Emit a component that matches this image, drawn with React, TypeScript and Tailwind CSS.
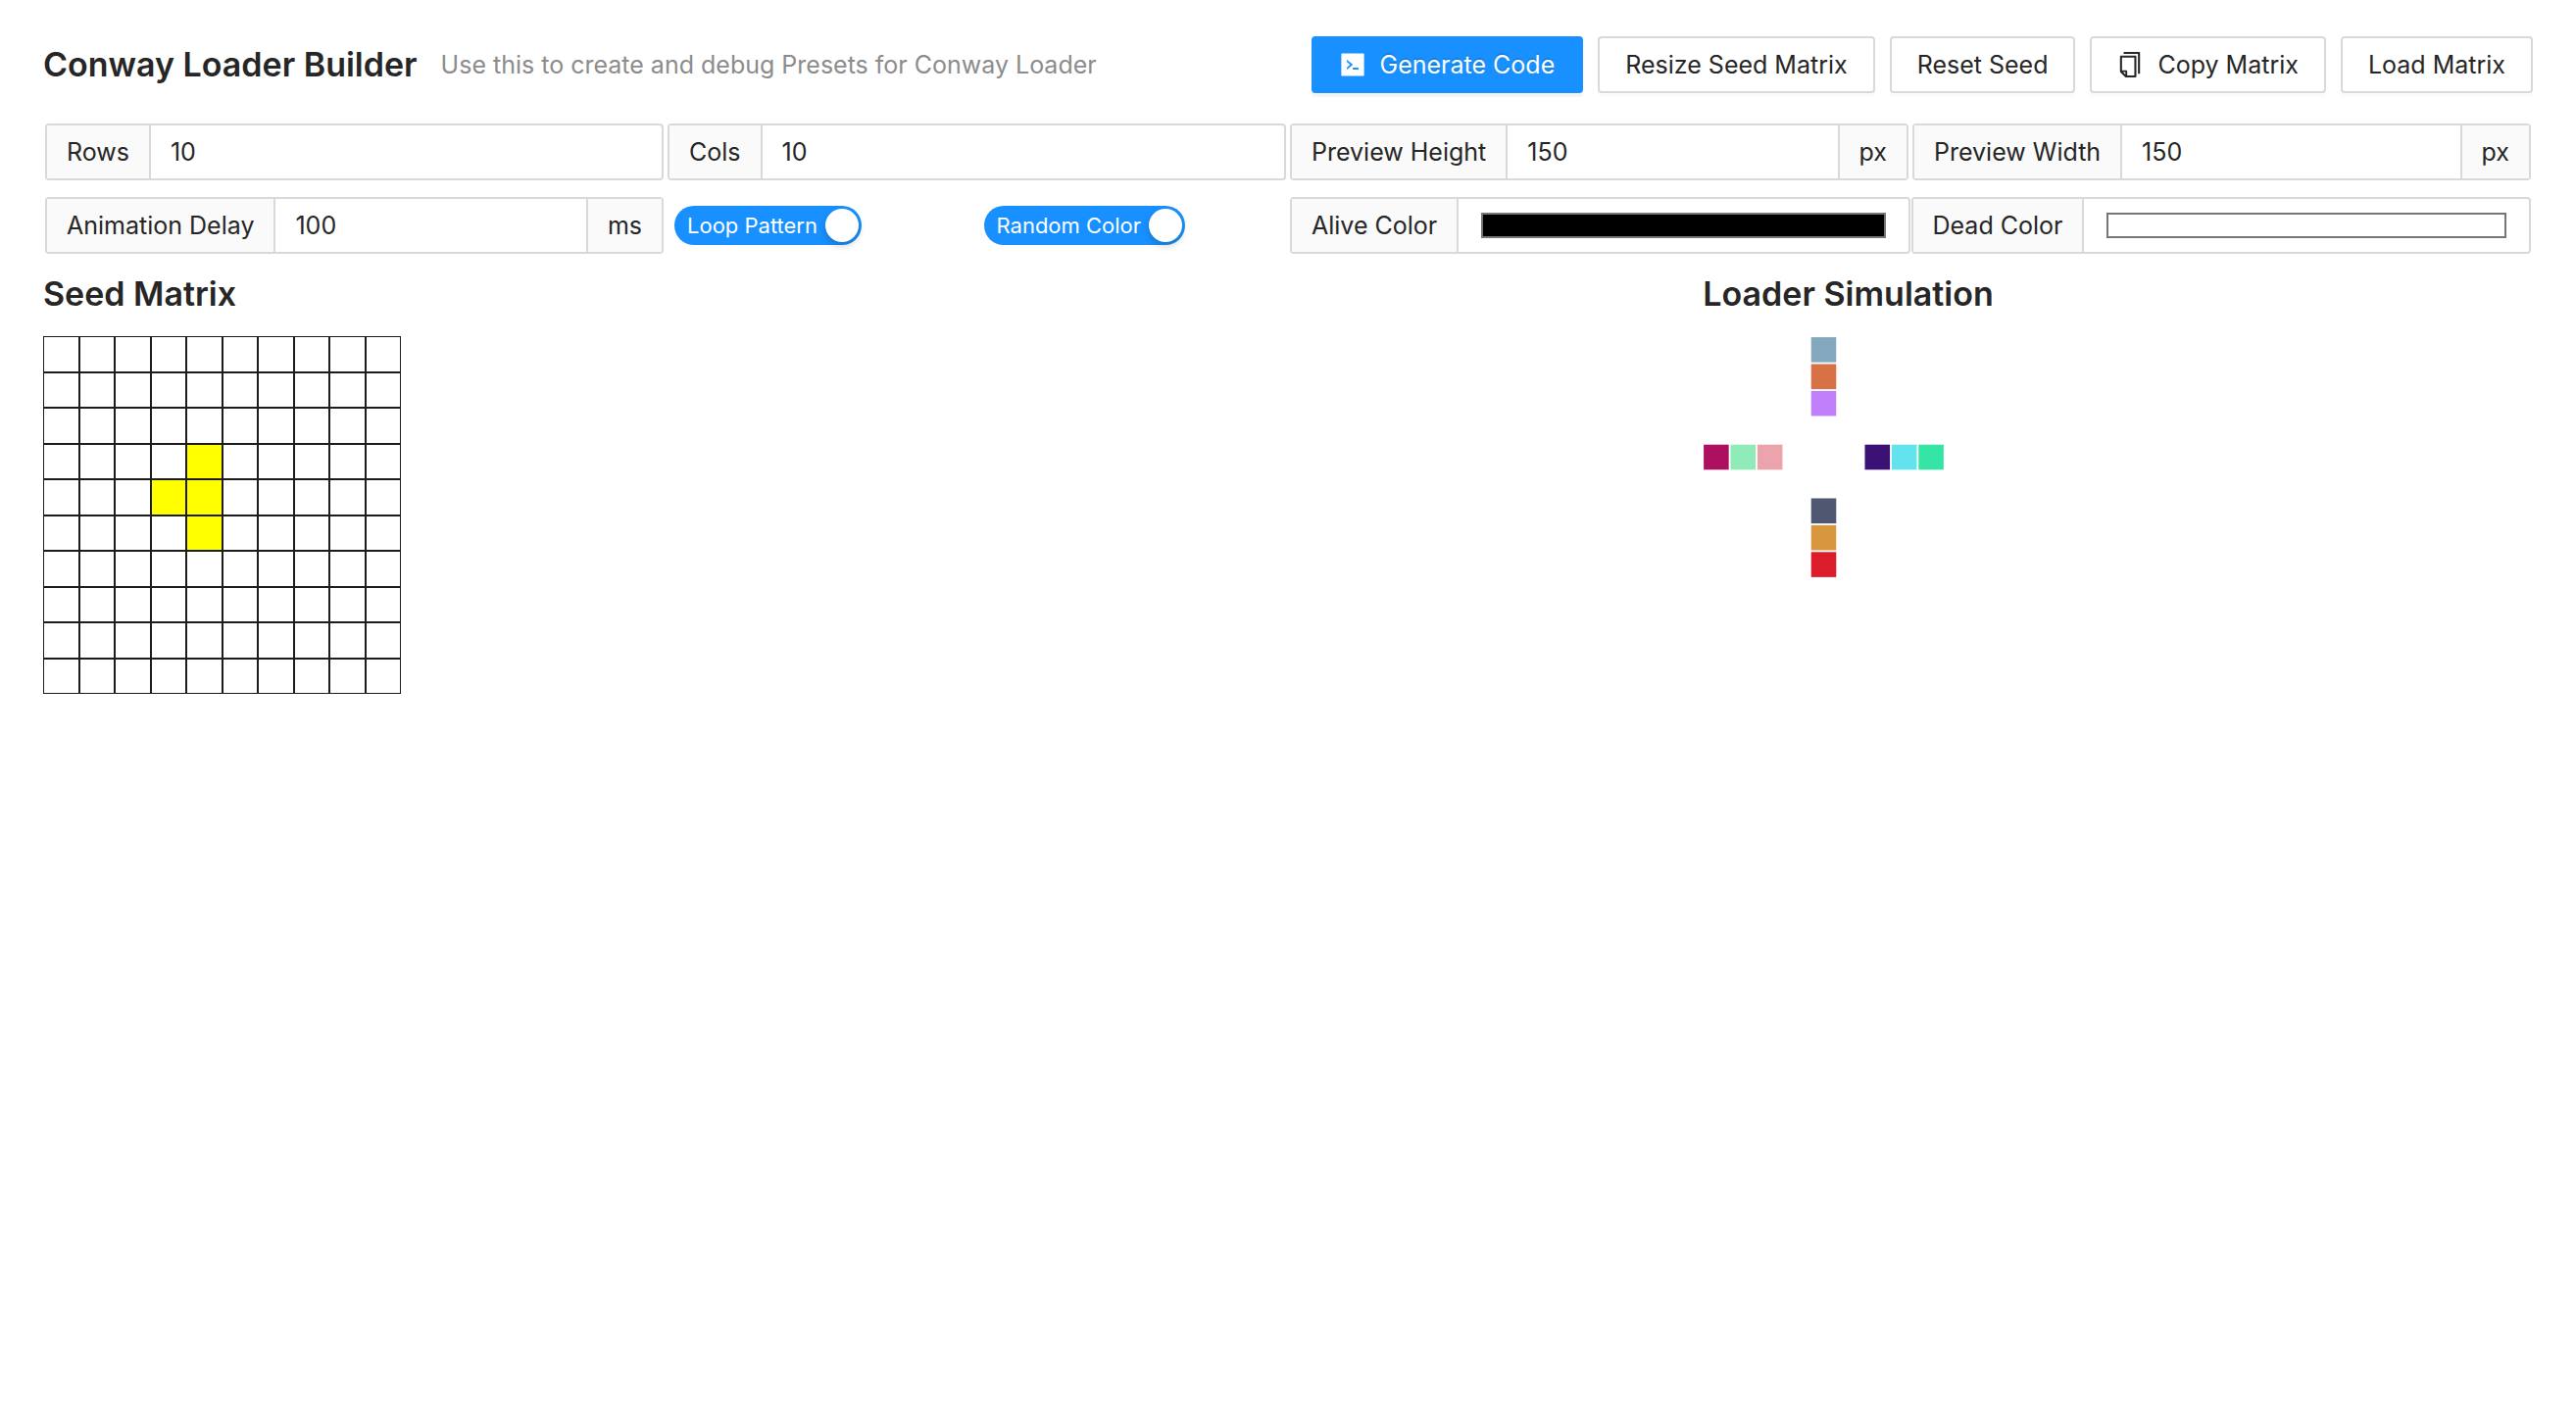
import React, { useId, useState } from "react";

const ROWS = 10;
const COLS = 10;
const SEED = ["3-4", "4-3", "4-4", "5-4"];

const ALIVE: { row: number; col: number; color: string }[] = [
  { row: 0, col: 4, color: "#84a9bf" },
  { row: 1, col: 4, color: "#d77146" },
  { row: 2, col: 4, color: "#c080fc" },
  { row: 4, col: 0, color: "#ac105f" },
  { row: 4, col: 1, color: "#8febb8" },
  { row: 4, col: 2, color: "#eba3ac" },
  { row: 4, col: 6, color: "#3b1175" },
  { row: 4, col: 7, color: "#62e3ee" },
  { row: 4, col: 8, color: "#35e5a5" },
  { row: 6, col: 4, color: "#505871" },
  { row: 7, col: 4, color: "#d8973f" },
  { row: 8, col: 4, color: "#dc1b2b" },
];

function CodeIcon() {
  return (
    <svg viewBox="64 64 896 896" className="size-[26px]" fill="currentColor" aria-hidden="true">
      <path d="M880 112H144c-17.7 0-32 14.3-32 32v736c0 17.7 14.3 32 32 32h736c17.7 0 32-14.3 32-32V144c0-17.7-14.3-32-32-32zM513.1 518.1l-192 161c-5.2 4.4-13.1.7-13.1-6.1v-62.7c0-2.3 1.1-4.6 2.9-6.1L420.7 512l-109.8-92.2a7.63 7.63 0 0 1-2.9-6.1V351c0-6.8 7.9-10.5 13.1-6.1l192 160.9c3.9 3.2 3.9 9.1 0 12.3zM716 673c0 4.4-3.4 8-7.5 8h-185c-4.1 0-7.5-3.6-7.5-8v-48c0-4.4 3.4-8 7.5-8h185c4.1 0 7.5 3.6 7.5 8v48z" />
    </svg>
  );
}

function CopyIcon() {
  return (
    <svg viewBox="64 64 896 896" className="size-[26px]" fill="currentColor" aria-hidden="true">
      <path d="M832 64H296c-4.4 0-8 3.6-8 8v56c0 4.4 3.6 8 8 8h496v688c0 4.4 3.6 8 8 8h56c4.4 0 8-3.6 8-8V96c0-17.7-14.3-32-32-32zM704 192H192c-17.7 0-32 14.3-32 32v530.7c0 8.5 3.4 16.6 9.4 22.6l173.3 173.3c2.2 2.2 4.7 4 7.4 5.5v1.9h4.2c3.5 1.3 7.2 2 11 2H704c17.7 0 32-14.3 32-32V224c0-17.7-14.3-32-32-32zM350 856.2L263.9 770H350v86.2zM664 888H414V746c0-22.1-17.9-40-40-40H232V264h432v624z" />
    </svg>
  );
}

function Button({ primary, icon, children }: { primary?: boolean; icon?: React.ReactNode; children: React.ReactNode }) {
  return (
    <button
      type="button"
      className={
        primary
          ? "flex h-[58px] items-center gap-[15px] whitespace-nowrap rounded border-2 border-[#1890ff] bg-[#1890ff] px-[27px] text-white shadow-[0_4px_0_rgba(0,0,0,0.045)] text-shadow-[0_-2px_0_rgba(0,0,0,0.12)]"
          : "flex h-[58px] items-center gap-[15px] whitespace-nowrap rounded border-2 border-[#d9d9d9] bg-white px-[26px] shadow-[0_4px_0_rgba(0,0,0,0.015)]"
      }
    >
      {icon}
      {children}
    </button>
  );
}

function NumberField({ label, initial, unit }: { label: string; initial: string; unit?: string }) {
  const id = useId();
  const [value, setValue] = useState(initial);
  return (
    <div className="flex h-[58px] min-w-0 flex-1 rounded border-2 border-[#d9d9d9] bg-white">
      <label htmlFor={id} className="flex items-center whitespace-nowrap border-r-2 border-[#d9d9d9] bg-[#fafafa] px-5">
        {label}
      </label>
      <input
        id={id}
        type="text"
        inputMode="numeric"
        value={value}
        onChange={(e) => setValue(e.target.value)}
        className="w-full min-w-0 flex-1 px-5 outline-none"
      />
      {unit && (
        <span className="flex items-center border-l-2 border-[#d9d9d9] bg-[#fafafa] px-5">{unit}</span>
      )}
    </div>
  );
}

function ColorField({ label, initial }: { label: string; initial: string }) {
  const id = useId();
  const [value, setValue] = useState(initial);
  return (
    <div className="flex h-[58px] min-w-0 flex-1 items-center rounded border-2 border-[#d9d9d9] bg-white">
      <label htmlFor={id} className="flex h-full items-center whitespace-nowrap border-r-2 border-[#d9d9d9] bg-[#fafafa] px-5">
        {label}
      </label>
      <input
        id={id}
        type="color"
        value={value}
        onChange={(e) => setValue(e.target.value)}
        className="mx-[23px] h-[26px] min-w-0 flex-1 appearance-none [&::-webkit-color-swatch-wrapper]:p-0 [&::-webkit-color-swatch]:rounded-none [&::-webkit-color-swatch]:border-2 [&::-webkit-color-swatch]:border-[#767676]"
      />
    </div>
  );
}

function Toggle({ label }: { label: string }) {
  const [on, setOn] = useState(true);
  return (
    <button
      type="button"
      role="switch"
      aria-checked={on}
      onClick={() => setOn(!on)}
      className={
        on
          ? "ml-[7px] flex h-10 items-center gap-2 rounded-full bg-[#1890ff] pl-[13px] pr-[3px] text-[22px] text-white"
          : "ml-[7px] flex h-10 flex-row-reverse items-center gap-2 rounded-full bg-black/25 pl-[3px] pr-[13px] text-[22px] text-white"
      }
    >
      {label}
      <span className="size-[34px] rounded-full bg-white shadow-[0_4px_7px_rgba(0,35,11,0.2)]" />
    </button>
  );
}

function SeedMatrix() {
  const [alive, setAlive] = useState<string[]>(SEED);
  const toggle = (key: string) =>
    setAlive(alive.includes(key) ? alive.filter((k) => k !== key) : [...alive, key]);
  return (
    <div className="grid size-[365px] grid-cols-10 grid-rows-10">
      {Array.from({ length: ROWS * COLS }, (_, i) => {
        const key = `${Math.floor(i / COLS)}-${i % COLS}`;
        return (
          <button
            key={key}
            type="button"
            aria-label={`Cell ${key}`}
            aria-pressed={alive.includes(key)}
            onClick={() => toggle(key)}
            className={alive.includes(key) ? "border border-[#1c1c1c] bg-[#ffff00]" : "border border-[#1c1c1c] bg-white"}
          />
        );
      })}
    </div>
  );
}

function LoaderPreview() {
  return (
    <svg viewBox="0 0 150 150" className="size-[274px]" aria-hidden="true">
      {ALIVE.map((c) => (
        <rect key={`${c.row}-${c.col}`} x={c.col * 15 + 0.6} y={c.row * 15 + 0.6} width="14" height="14" fill={c.color} />
      ))}
    </svg>
  );
}

export default function App() {
  return (
    <main className="bg-white px-11 pt-[37px] font-['Inter',sans-serif] text-[25px] leading-10 text-[#262626]">
      <header className="flex items-center justify-between">
        <div className="flex items-center gap-6 whitespace-nowrap">
          <h1 className="text-[34px] font-semibold leading-[58px]">Conway Loader Builder</h1>
          <span className="text-[#8c8c8c]">Use this to create and debug Presets for Conway Loader</span>
        </div>
        <div className="flex gap-[15px]">
          <Button primary icon={<CodeIcon />}>Generate Code</Button>
          <Button>Resize Seed Matrix</Button>
          <Button>Reset Seed</Button>
          <Button icon={<CopyIcon />}>Copy Matrix</Button>
          <Button>Load Matrix</Button>
        </div>
      </header>

      <form className="mt-[31px] grid grid-cols-4 gap-x-1 gap-y-[17px] px-[2px]">
        <NumberField label="Rows" initial="10" />
        <NumberField label="Cols" initial="10" />
        <NumberField label="Preview Height" initial="150" unit="px" />
        <NumberField label="Preview Width" initial="150" unit="px" />
        <NumberField label="Animation Delay" initial="100" unit="ms" />
        <div className="grid grid-cols-2 items-center justify-items-start">
          <Toggle label="Loop Pattern" />
          <Toggle label="Random Color" />
        </div>
        <div className="col-span-2 flex gap-px">
          <ColorField label="Alive Color" initial="#000000" />
          <ColorField label="Dead Color" initial="#ffffff" />
        </div>
      </form>

      <div className="mt-4 grid grid-cols-3">
        <section className="col-span-2">
          <h2 className="mb-[18px] text-[34px] font-semibold leading-[50px]">Seed Matrix</h2>
          <SeedMatrix />
        </section>
        <section>
          <h2 className="mb-[18px] text-[34px] font-semibold leading-[50px]">Loader Simulation</h2>
          <LoaderPreview />
        </section>
      </div>
    </main>
  );
}
